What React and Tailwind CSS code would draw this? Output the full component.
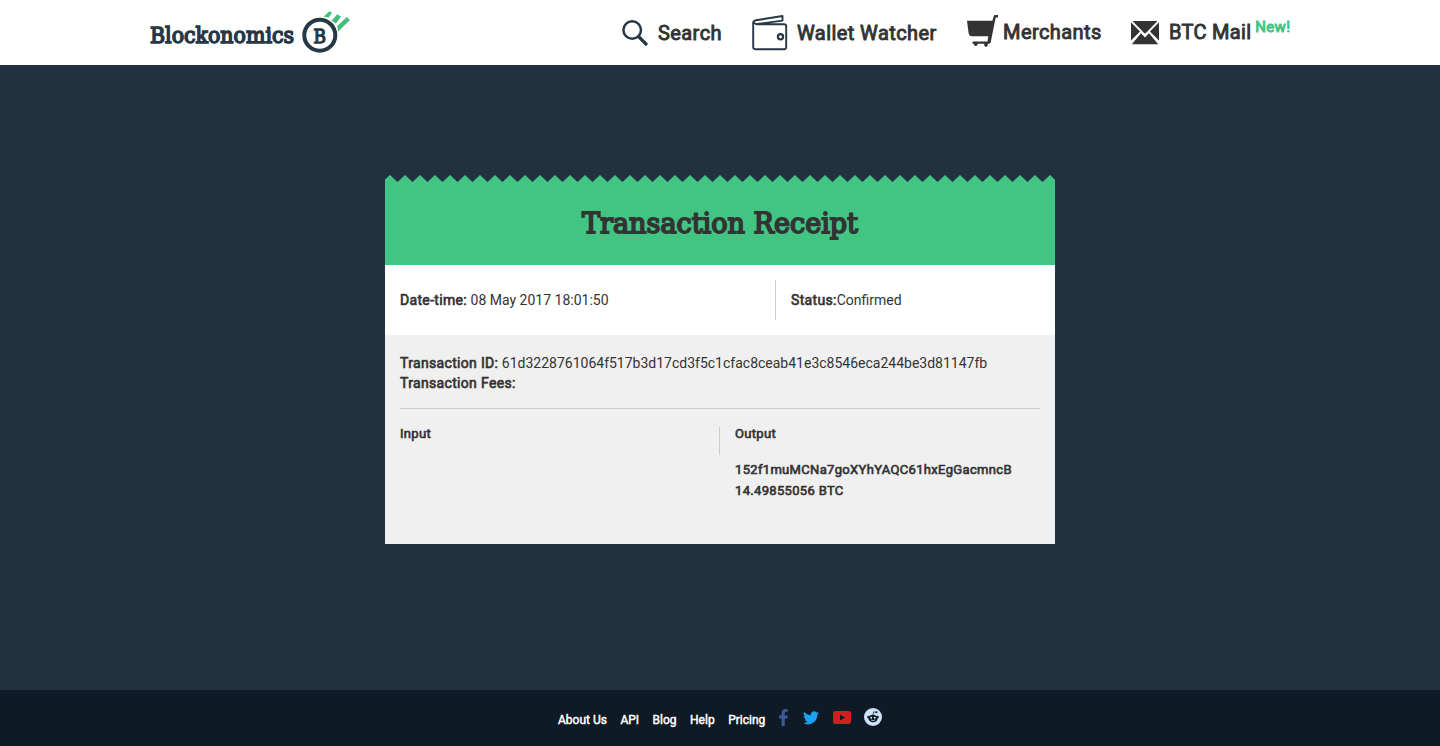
import React from 'react';

const bold = '[-webkit-text-stroke:0.65px_currentColor]';
const slab = { fontFamily: '"Roboto Slab", "DejaVu Serif", serif' };

function Logo() {
  return (
    <svg width="202" height="46" viewBox="0 0 202 46" className="block overflow-visible">
      <text x="1" y="33.500" textLength="144" lengthAdjust="spacingAndGlyphs" fill="#263746" stroke="#263746" strokeWidth="1.500" fontSize="21.5" style={slab}>Blockonomics</text>
      <circle cx="170.8" cy="26.2" r="15.500" fill="none" stroke="#263746" strokeWidth="4" />
      <text x="164.500" y="33.500" textLength="12.500" lengthAdjust="spacingAndGlyphs" fill="#263746" stroke="#263746" strokeWidth="1.300" fontSize="19" style={slab}>B</text>
      <g fill="#42bd7d">
        <path d="M174.700 7.700 180.300 2.300 183 3.700 179.700 8.600Z" />
        <path d="M182.500 11.700 188.300 5.300 192 7.700 187 14.500Z" />
        <path d="M188.300 17 197.700 8 201 11 189 22.700Z" />
      </g>
    </svg>
  );
}

function SearchIcon() {
  return (
    <svg width="26" height="28" viewBox="0 0 26 28" className="block" fill="none" stroke="#263746">
      <circle cx="10.200" cy="11" r="8.800" strokeWidth="2.500" />
      <path d="M16.500 17.500 25 26" strokeWidth="3.200" />
    </svg>
  );
}

function WalletIcon() {
  return (
    <svg width="36" height="36" viewBox="0 0 36 36" className="block" fill="none" stroke="#263746" strokeWidth="1.900" strokeLinejoin="round">
      <path d="M1.200 7V32q0 2.200 2.200 2.200H32q2.200 0 2.200-2.200V11.300q0-2-2.200-2H6Q3 9.300 1.200 7Q1.500 5.600 4 5.200L30.500 1V5.600L5.500 9" />
      <circle cx="28.500" cy="21.800" r="2.600" strokeWidth="2.200" />
    </svg>
  );
}

function CartIcon() {
  return (
    <svg width="32" height="32" viewBox="0 0 32 32" className="block" fill="#333">
      <path d="M0 5.800H25.400L26.700 1.200Q27 0 28.400 0H31V2.600H28.700L23.700 27.200Q23.300 28.800 21.800 28.800H20.500A1.800 1.800 0 1 1 17.500 28.800H10.500A1.800 1.800 0 1 1 7 28.800H5.500V26.600H20.500L21.300 21.200H4.500Q2 21 1.600 18Z" />
    </svg>
  );
}

function MailIcon() {
  return (
    <svg width="28" height="24" viewBox="0 0 28 24" className="block" fill="#333">
      <path d="M1.500 0H26.500L14.800 12Q14 12.800 13.200 12Z" />
      <path d="M0 1.300 9 10.500 0 19.500ZM28 1.300 19 10.500 28 19.500Z" />
      <path d="M.8 23.300 10 12.300 14 16.500 18 12.300 27.200 23.300Z" />
    </svg>
  );
}

function ZigZag() {
  let d = 'M0 4.500L5 0';
  for (let x = 5; x < 670; x += 15) {
    d += `L${x + 7.5} 7L${x + 15} 0`;
  }
  return (
    <svg width="670" height="8" viewBox="0 0 670 8" className="block" fill="#42c483">
      <path d={d + 'V8H0Z'} />
    </svg>
  );
}

export default function App() {
  return (
    <div className="flex h-[746px] flex-col bg-[#22313f] font-['Roboto',sans-serif] text-sm leading-5 text-[#333]">
      <header className="flex h-[65px] shrink-0 bg-white">
        <div className="ml-[149px] mt-[9px] w-[473px]"><Logo /></div>
        <nav className="flex pt-[15px] [&_span]:[-webkit-text-stroke-width:0.9px]">
          <a className="flex w-[130px]">
            <span className="mt-1"><SearchIcon /></span>
            <span className={`ml-[10px] mt-[6px] whitespace-nowrap text-[20px] leading-6 tracking-[0.42px] ${bold}`}>Search</span>
          </a>
          <a className="flex w-[215px]">
            <WalletIcon />
            <span className={`ml-[9px] mt-[6px] whitespace-nowrap text-[20px] leading-6 tracking-[0.42px] ${bold}`}>Wallet Watcher</span>
          </a>
          <a className="flex w-[164px]">
            <CartIcon />
            <span className={`ml-[4px] mt-[5px] whitespace-nowrap text-[20px] leading-6 tracking-[0.42px] ${bold}`}>Merchants</span>
          </a>
          <a className="flex">
            <span className="mt-[6px]"><MailIcon /></span>
            <span className={`ml-[10px] mt-[5px] whitespace-nowrap text-[20px] leading-6 tracking-[0.3px] ${bold}`}>BTC Mail</span>
            <span className={`ml-[4px] mt-[2px] text-[15px] leading-5 tracking-[0.3px] text-[#42c483] ${bold}`}>New!</span>
          </a>
        </nav>
      </header>

      <main className="flex grow justify-center pt-[110px]">
        <section className="flex h-[369px] w-[670px] flex-col">
          <ZigZag />
          <div className="flex h-[82px] items-center justify-center bg-[#42c483]">
            <h1>
              <svg width="400" height="40" viewBox="0 0 400 40" className="block overflow-visible" fill="#333" stroke="#333" strokeWidth="1.800">
                <text x="62" y="28.500" textLength="276" lengthAdjust="spacingAndGlyphs" fontSize="27.500" style={slab}>Transaction Receipt</text>
              </svg>
            </h1>
          </div>
          <div className="flex h-[70px] bg-white px-[15px] py-[15px]">
            <p className="w-[375px] pt-[10px]"><span className={`tracking-[0.33px] ${bold}`}>Date-time:</span> 08 May 2017 18:01:50</p>
            <p className="border-l border-[#ccc] pl-[15px] pt-[10px]"><span className={`tracking-[0.33px] ${bold}`}>Status:</span>Confirmed</p>
          </div>
          <div className="grow bg-[#f0f0f0] px-[15px] pt-[18px]">
            <p><span className={`tracking-[0.33px] ${bold}`}>Transaction ID:</span> 61d3228761064f517b3d17cd3f5c1cfac8ceab41e3c8546eca244be3d81147fb</p>
            <p className={`tracking-[0.33px] ${bold}`}>Transaction Fees:</p>
            <hr className="mt-[15px] border-[#ccc]" />
            <div className="mt-[18px] flex text-[13px] tracking-[0.33px]">
              <h2 className={`h-7 w-[320px] border-r border-[#ccc] leading-[14px] ${bold}`}>Input</h2>
              <div className={`pl-[15px] ${bold}`}>
                <h2 className="leading-[14px]">Output</h2>
                <p className="mt-[18px] leading-[21px]">152f1muMCNa7goXYhYAQC61hxEgGacmncB<br />14.49855056 BTC</p>
              </div>
            </div>
          </div>
        </section>
      </main>

      <footer className="flex h-14 shrink-0 bg-[#0e1a25] pl-[558px] text-white">
        <nav className="flex gap-[13.5px] pt-5 text-[12px] [-webkit-text-stroke:0.45px_currentColor]">
          <a>About Us</a><a>API</a><a>Blog</a><a>Help</a><a>Pricing</a>
        </nav>
        <div className="flex pl-[14px] pt-[18px]">
          <svg width="9" height="18" viewBox="0 0 9 18" className="mt-[1px]" fill="#3b5998"><path d="M2.600 17V9.500H0V6.400h2.600V4.200C2.600 1.500 4.200 0 6.600 0q1.200 0 2.200.2v2.600H7.300C6 2.800 5.800 3.500 5.800 4.400v2h3l-.4 3.100H5.800V17Z" /></svg>
          <svg width="16" height="14" viewBox="0 0 24 20" className="ml-[15px] mt-[3px]" fill="#1da1f2"><path d="M24 2.400a10 10 0 0 1-2.800.8A5 5 0 0 0 23.300.4a10 10 0 0 1-3.100 1.200 4.900 4.900 0 0 0-8.400 4.500A14 14 0 0 1 1.700 1 4.900 4.900 0 0 0 3.200 7.500 5 5 0 0 1 1 6.900c0 2.300 1.600 4.400 3.900 4.900a5 5 0 0 1-2.200.1 4.900 4.900 0 0 0 4.600 3.400A9.900 9.900 0 0 1 0 17.300 14 14 0 0 0 21.500 4.900 10 10 0 0 0 24 2.400Z" /></svg>
          <svg width="18" height="13" viewBox="0 0 18 13" className="ml-[14px] mt-[3px]"><rect width="18" height="13" rx="2.500" fill="#cd201f" /><path d="M7 3.500v6l5-3Z" fill="#0e1a25" /></svg>
          <svg width="18" height="18" viewBox="0 0 18 18" className="ml-[13px]">
            <circle cx="9" cy="9" r="9" fill="#cee3f8" />
            <ellipse cx="9" cy="10.500" rx="4.600" ry="3.800" fill="#0e1a25" />
            <circle cx="4.500" cy="9" r="1.300" fill="#0e1a25" /><circle cx="13.500" cy="9" r="1.300" fill="#0e1a25" />
            <circle cx="12.500" cy="4.300" r="1" fill="#0e1a25" />
            <path d="M9 7 9.700 3.800 12.500 4.300" fill="none" stroke="#0e1a25" strokeWidth=".7" />
            <circle cx="7.200" cy="9.700" r="1" fill="#cee3f8" /><circle cx="10.800" cy="9.700" r="1" fill="#cee3f8" />
            <path d="M7 12Q9 13.300 11 12" fill="none" stroke="#cee3f8" strokeWidth=".7" />
          </svg>
        </div>
      </footer>
    </div>
  );
}
